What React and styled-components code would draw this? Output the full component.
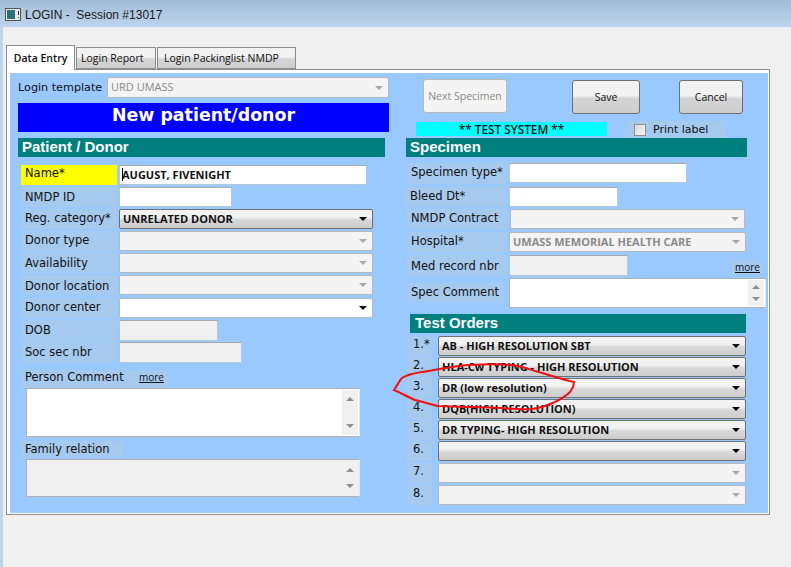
import styled, { createGlobalStyle } from "styled-components";

const GlobalStyle = createGlobalStyle`
  html, body {
    margin: 0;
    padding: 0;
    background: #f0f0f0;
  }
  * {
    box-sizing: border-box;
  }
`;

const font = `"DejaVu Sans", Verdana, sans-serif`;

const Arrow = ({ up, color }) => (
  <svg width="8" height="4" viewBox="0 0 8 4">
    <path d={up ? "M0 4 L4 0 L8 4 Z" : "M0 0 L8 0 L4 4 Z"} fill={color} />
  </svg>
);

const Combo = ({ mode = "off", width, plain, children }) => (
  <ComboBox $mode={mode} $w={width}>
    <ComboText $mode={mode} $plain={plain}>{children}</ComboText>
    <Arrow color={mode === "off" ? "#a8a8a8" : "#000"} />
  </ComboBox>
);

const Memo = ({ width, height, off }) => (
  <MemoBox $w={width} $h={height} $off={off}>
    <ScrollStrip $tight={height < 35}>
      <Arrow up color="#8f8f8f" />
      <Arrow color="#8f8f8f" />
    </ScrollStrip>
  </MemoBox>
);

const leftRows = [
  { label: "NMDP ID", kind: "input", width: 113, pad: 2 },
  { label: "Reg. category*", kind: "on", text: "UNRELATED DONOR", pad: 1 },
  { label: "Donor type", kind: "off", pad: 1 },
  { label: "Availability", kind: "off", pad: 2 },
  { label: "Donor location", kind: "off", pad: 3 },
];

const orders = [
  { n: "1.*", text: "AB - HIGH RESOLUTION SBT", mode: "on" },
  { n: "2.", text: "HLA-Cw TYPING - HIGH RESOLUTION", mode: "on" },
  { n: "3.", text: "DR (low resolution)", mode: "on" },
  { n: "4.", text: "DQB(HIGH RESOLUTION)", mode: "on" },
  { n: "5.", text: "DR TYPING- HIGH RESOLUTION", mode: "on" },
  { n: "6.", text: "", mode: "on" },
  { n: "7.", text: "", mode: "off", top: 2 },
  { n: "8.", text: "", mode: "off", top: 2 },
];

const App = () => {
  return (
    <Window>
      <GlobalStyle />
      <TitleBar>
        <svg width="16" height="13" viewBox="0 0 16 13">
          <rect x="0.5" y="0.5" width="15" height="12" fill="#e8e8e8" stroke="#555" />
          <rect x="2" y="2" width="8" height="9" fill="#2f6f78" />
          <rect x="13" y="3" width="1" height="4" fill="#333" />
          <rect x="13" y="9" width="1" height="1" fill="#333" />
        </svg>
        <span>LOGIN -&nbsp; Session #13017</span>
      </TitleBar>
      <Body>
        <Tabs>
          <Tab $active>Data Entry</Tab>
          <Tab $w={80} $pad={4}>Login Report</Tab>
          <Tab $w={139} $pad={6}>Login Packinglist NMDP</Tab>
        </Tabs>
        <Panel>
          <BluePane>
            <LeftColumn>
              <TemplateRow>
                <PlainLabel>Login template</PlainLabel>
                <Combo width={282} plain>URD UMASS</Combo>
              </TemplateRow>
              <Banner>New patient/donor</Banner>
              <SectionHead $w={367} $top={6}>Patient / Donor</SectionHead>

              <Row $top={8}>
                <Label $highlight $pad={0}>Name*</Label>
                <Input $w={248} $h={20}>
                  <Caret />
                  AUGUST, FIVENIGHT
                </Input>
              </Row>
              {leftRows.map((row) => (
                <Row key={row.label} $top={2}>
                  <Label $pad={row.pad}>{row.label}</Label>
                  {row.kind === "input" && <Input $w={row.width} $h={20} />}
                  {row.kind !== "input" && (
                    <Combo mode={row.kind} width={254}>{row.text}</Combo>
                  )}
                </Row>
              ))}
              <Row $top={3}>
                <Label>Donor center</Label>
                <Combo mode="white" width={254} />
              </Row>
              <Row $top={2} $h={21}>
                <Label $pad={2}>DOB</Label>
                <Input $w={99} $h={21} $off />
              </Row>
              <Row $top={1} $h={21}>
                <Label $pad={2}>Soc sec nbr</Label>
                <Input $w={123} $h={21} $off />
              </Row>

              <CommentHead $top={7}>
                <CommentLabel $w={115}>Person Comment</CommentLabel>
                <MoreLink $w={33}>more</MoreLink>
              </CommentHead>
              <Memo width={334} height={49} />
              <CommentHead $top={4}>
                <CommentLabel $w={102} $pad={1}>Family relation</CommentLabel>
              </CommentHead>
              <MemoGap />
              <Memo width={334} height={38} off />
            </LeftColumn>

            <RightColumn>
              <Actions>
                <ActionButton $w={84} $off>Next Specimen</ActionButton>
                <ActionButton $w={68} $left={65}>Save</ActionButton>
                <ActionButton $w={64} $left={39}>Cancel</ActionButton>
              </Actions>
              <StatusRow>
                <TestBadge>** TEST SYSTEM **</TestBadge>
                <PrintLabel>
                  <CheckBox />
                  Print label
                </PrintLabel>
              </StatusRow>
              <SectionHead $w={341}>Specimen</SectionHead>

              <SpecRow $top={6} $h={21}>
                <Label $w={100}>Specimen type*</Label>
                <Input $w={178} $h={20} $left={2} />
              </SpecRow>
              <SpecRow $top={3} $shift={0}>
                <Label $w={100}>Bleed Dt*</Label>
                <Input $w={109} $h={20} $left={3} />
              </SpecRow>
              <SpecRow $top={2}>
                <Label $w={100}>NMDP Contract</Label>
                <ComboSlot $left={3}><Combo width={235} /></ComboSlot>
              </SpecRow>
              <SpecRow $top={3}>
                <Label $w={100}>Hospital*</Label>
                <ComboSlot $left={2}><Combo width={237}>UMASS MEMORIAL HEALTH CARE</Combo></ComboSlot>
              </SpecRow>
              <SpecRow $top={3} $h={21}>
                <Label $w={100} $pad={3}>Med record nbr</Label>
                <Input $w={119} $h={21} $left={2} $off />
                <MoreLink $w={31} $end>more</MoreLink>
              </SpecRow>
              <SpecRow $top={2} $h={30}>
                <SpecCommentLabel $w={96}>Spec Comment</SpecCommentLabel>
                <ComboSlot $left={6}><Memo width={257} height={30} /></ComboSlot>
              </SpecRow>

              <OrdersHead>Test Orders</OrdersHead>
              <Orders>
                {orders.map((order) => (
                  <OrderRow key={order.n} $top={order.top}>
                    <OrderNumber>{order.n}</OrderNumber>
                    <Combo mode={order.mode} width={308}>{order.text}</Combo>
                  </OrderRow>
                ))}
              </Orders>
            </RightColumn>
          </BluePane>
        </Panel>
      </Body>

      <RedMark viewBox="0 0 791 567">
        <path
          d="M394 390 C397 386 399 381 402 378 C408 374 415 373 422 372 C438 370 452 366 468 365 C486 364 503 363 518 366 C527 368 534 371 542 373 C552 376 564 380 574 382 C574 387 572 389 570 392 C566 396 561 399 555 402 C548 405 540 408 532 409 C522 410 512 409 502 408 C480 407 459 407 438 406 C430 404 423 402 415 400 C408 397 401 393 394 390 Z"
          fill="none"
          stroke="#f01010"
          strokeWidth="2"
        />
      </RedMark>
    </Window>
  );
};

const Window = styled.div`
  position: relative;
  width: 791px;
  height: 567px;
  overflow: hidden;
  background: #f0f0f0;
  font-family: ${font};
  font-size: 12px;
  color: #111;
`;

const TitleBar = styled.div`
  display: flex;
  align-items: center;
  gap: 4px;
  height: 27px;
  padding: 2px 0 0 5px;
  background: linear-gradient(#a2bcd8, #bcd5ec);
  font-family: "Liberation Sans", Arial, sans-serif;
  font-size: 12px;
  color: #1a1a1a;
`;

const Body = styled.div`
  height: 540px;
  border-left: 3px solid #bdd6ee;
  padding: 18px 0 0 3px;
`;

const Tabs = styled.div`
  display: flex;
  align-items: flex-end;
  height: 24px;
  gap: 1px;
`;

const Tab = styled.div`
  display: flex;
  align-items: center;
  justify-content: ${(p) => (p.$active ? "center" : "flex-start")};
  width: ${(p) => (p.$active ? 69 : p.$w)}px;
  height: ${(p) => (p.$active ? 25 : 22)}px;
  margin-bottom: ${(p) => (p.$active ? -1 : 0)}px;
  padding-left: ${(p) => p.$pad || 0}px;
  border: 1px solid #8c8c8c;
  border-bottom: ${(p) => (p.$active ? "none" : "1px solid #8c8c8c")};
  background: ${(p) => (p.$active ? "#fff" : "linear-gradient(#f2f2f2 45%, #d4d4d4 55%, #cfcfcf)")};
  position: relative;
  z-index: ${(p) => (p.$active ? 1 : 0)};
  font-family: "Open Sans", sans-serif;
  font-size: 10.5px;
  font-weight: ${(p) => (p.$active ? 600 : 400)};
`;

const Panel = styled.div`
  width: 764px;
  height: 446px;
  border: 1px solid #8c8c8c;
  padding: 3px 1px 1px 3px;
  background: #fff;
`;

const BluePane = styled.div`
  display: flex;
  height: 100%;
  background: #99c9ff;
  padding: 4px 0 0 8px;
`;

const LeftColumn = styled.div`
  width: 388px;
  flex: none;
`;

const RightColumn = styled.div`
  width: 362px;
  flex: none;
`;

const TemplateRow = styled.div`
  display: flex;
  align-items: center;
  height: 21px;
  gap: 5px;
`;

const PlainLabel = styled.div`
  width: 84px;
  white-space: nowrap;
  font-size: 11.2px;
`;

const Banner = styled.div`
  display: flex;
  align-items: center;
  justify-content: center;
  width: 371px;
  height: 29px;
  margin-top: 5px;
  padding-bottom: 5px;
  background: #0000ff;
  color: #fff;
  font-size: 17.4px;
  font-weight: 700;
`;

const SectionHead = styled.div`
  display: flex;
  align-items: center;
  width: ${(p) => p.$w}px;
  height: 19px;
  margin-top: ${(p) => p.$top || 0}px;
  padding: 0 0 2px 4px;
  background: #007f7f;
  color: #fff;
  font-family: "Liberation Sans", Arial, sans-serif;
  font-size: 15px;
  font-weight: 700;
`;

const OrdersHead = styled(SectionHead).attrs({ $w: 336, $top: 6 })`
  margin-left: 4px;
  padding-left: 5px;
`;

const Row = styled.div`
  display: flex;
  height: ${(p) => p.$h || 20}px;
  margin-top: ${(p) => p.$top}px;
  margin-left: 3px;
  gap: 2px;
`;

const SpecRow = styled.div`
  display: flex;
  height: ${(p) => p.$h || 20}px;
  margin-top: ${(p) => p.$top}px;
  margin-left: ${(p) => p.$shift ?? 1}px;
`;

const Label = styled.div`
  width: ${(p) => p.$w || 96}px;
  height: 100%;
  flex: none;
  padding: ${(p) => p.$pad ?? 1}px 0 0 4px;
  background: ${(p) => (p.$highlight ? "#ffff00" : "#a6c9ee")};
  line-height: 16px;
  white-space: nowrap;
  font-size: 11.5px;
`;

const SpecCommentLabel = styled(Label)`
  height: 19px;
  margin-top: 5px;
`;

const Input = styled.div`
  display: flex;
  align-items: center;
  width: ${(p) => p.$w}px;
  height: ${(p) => p.$h}px;
  flex: none;
  margin-left: ${(p) => p.$left || 0}px;
  padding: 0 0 2px 2px;
  border: 1px solid #b4c8dc;
  border-top-color: #a9a9a9;
  background: ${(p) => (p.$off ? "#f0f0f0" : "#fff")};
  font-family: "Open Sans", sans-serif;
  font-size: 11px;
  font-weight: 700;
`;

const Caret = styled.span`
  width: 1px;
  height: 13px;
  margin-right: -1px;
  background: #000;
`;

const ComboSlot = styled.div`
  flex: none;
  margin-left: ${(p) => p.$left}px;
`;

const comboBackground = {
  on: "linear-gradient(#f2f2f2 40%, #d8d8d8 55%, #cdcdcd)",
  off: "#f4f4f4",
  white: "#fff",
};

const ComboBox = styled.div`
  display: flex;
  align-items: center;
  justify-content: space-between;
  width: ${(p) => p.$w}px;
  height: 100%;
  min-height: 20px;
  flex: none;
  padding: 0 5px 0 3px;
  border: 1px solid ${(p) => (p.$mode === "on" ? "#6f6f6f" : "#b3b8bc")};
  border-radius: 2px;
  background: ${(p) => comboBackground[p.$mode]};
`;

const ComboText = styled.span`
  position: relative;
  top: -1px;
  font-family: "Open Sans", sans-serif;
  font-size: 11px;
  font-weight: ${(p) => (p.$plain ? 400 : 700)};
  color: ${(p) => (p.$mode === "off" ? "#8a8a8a" : "#111")};
  white-space: nowrap;
`;

const CommentHead = styled.div`
  display: flex;
  height: ${(p) => (p.$top === 7 ? 18 : 16)}px;
  margin-top: ${(p) => p.$top}px;
  margin-left: 3px;
`;

const CommentLabel = styled(Label)`
  line-height: 14px;
  padding-top: ${(p) => p.$pad || 0}px;
`;

const MoreLink = styled.div`
  width: ${(p) => p.$w}px;
  height: ${(p) => (p.$end ? "14px" : "100%")};
  align-self: ${(p) => (p.$end ? "flex-end" : "stretch")};
  margin: ${(p) => (p.$end ? "0 5px 2px auto" : "0")};
  padding-left: 3px;
  background: #a6c9ee;
  text-decoration: underline;
  font-family: "Open Sans", sans-serif;
  font-size: 10px;
  line-height: ${(p) => (p.$end ? 14 : 15)}px;
`;

const MemoGap = styled.div`
  height: 2px;
`;

const MemoBox = styled.div`
  display: flex;
  justify-content: flex-end;
  width: ${(p) => p.$w}px;
  height: ${(p) => p.$h}px;
  margin-left: ${(p) => (p.$w === 334 ? 8 : 0)}px;
  padding: 1px;
  border: 1px solid #b0b0b0;
  border-right-color: #dbe8f5;
  background: ${(p) => (p.$off ? "#f0f0f0" : "#fff")};
`;

const ScrollStrip = styled.div`
  display: flex;
  flex-direction: column;
  align-items: center;
  justify-content: space-between;
  width: 16px;
  padding: ${(p) => (p.$tight ? "5px 0" : "7px 0")};
  background: #f0f0f0;
`;

const Actions = styled.div`
  display: flex;
  align-items: flex-start;
  height: 37px;
  margin-left: 17px;
  padding-top: 2px;
`;

const ActionButton = styled.div`
  display: flex;
  align-items: center;
  justify-content: center;
  width: ${(p) => p.$w}px;
  height: 34px;
  margin-left: ${(p) => p.$left || 0}px;
  margin-top: ${(p) => (p.$off ? 0 : 1)}px;
  border: 1px solid ${(p) => (p.$off ? "#b8b8b8" : "#6f6f6f")};
  border-radius: 3px;
  background: ${(p) => (p.$off ? "#f4f4f4" : "linear-gradient(#f2f2f2 45%, #d4d4d4 55%, #cdcdcd)")};
  color: ${(p) => (p.$off ? "#8a8a8a" : "#111")};
  font-family: "Open Sans", sans-serif;
  font-size: 10.5px;
`;

const StatusRow = styled.div`
  display: flex;
  height: 17px;
  margin-top: 7px;
  margin-left: 10px;
`;

const TestBadge = styled.div`
  display: flex;
  align-items: center;
  justify-content: center;
  width: 191px;
  height: 14px;
  margin-top: 1px;
  background: #00ffff;
  font-family: "Open Sans", sans-serif;
  font-size: 11.8px;
  font-weight: 600;
`;

const PrintLabel = styled.div`
  display: flex;
  align-items: center;
  gap: 7px;
  width: 101px;
  margin-left: 18px;
  padding-left: 9px;
  background: #a6c9ee;
  font-size: 11px;
  white-space: nowrap;
`;

const CheckBox = styled.span`
  width: 12px;
  height: 12px;
  flex: none;
  border: 1px solid #8e8f8f;
  background: linear-gradient(135deg, #d8d8d8, #f5f5f5);
`;

const Orders = styled.div`
  display: flex;
  flex-direction: column;
  margin-top: 3px;
  margin-left: 1px;
`;

const OrderRow = styled.div`
  display: flex;
  gap: 6px;
  height: 20px;
  margin-top: ${(p) => p.$top ?? 1}px;
  &:first-child {
    margin-top: 0;
  }
`;

const OrderNumber = styled.div`
  width: 25px;
  flex: none;
  padding-left: 6px;
  background: #a6c9ee;
  line-height: 17px;
  font-size: 11.5px;
`;

const RedMark = styled.svg`
  position: absolute;
  inset: 0;
  width: 791px;
  height: 567px;
  pointer-events: none;
`;

export default App;
